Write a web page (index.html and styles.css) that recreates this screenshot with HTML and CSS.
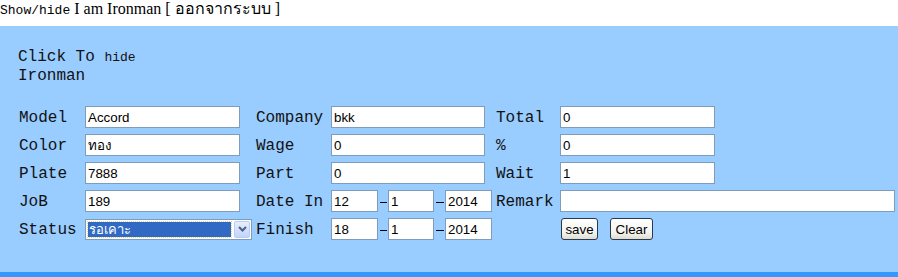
FILE: index.html
```html
<!DOCTYPE html>
<html>
<head>
<meta charset="utf-8">
<link rel="stylesheet" href="styles.css">
</head>
<body>
<div class="topline"><span class="toggle">Show/hide</span> <span class="user">I am Ironman [ ออกจากระบบ ]</span></div>
<div class="panel">
  <div class="intro"><span class="big">Click To </span><span class="small">hide</span><br><span class="big">Ironman</span></div>
  <table class="form">
    <tr>
      <td class="lab c1">Model</td>
      <td class="c2"><input class="txt w155" value="Accord"></td>
      <td class="lab c3">Company</td>
      <td class="c4"><input class="txt w154" value="bkk"></td>
      <td class="lab c5">Total</td>
      <td class="c6"><input class="txt w155" value="0"></td>
    </tr>
    <tr>
      <td class="lab">Color</td>
      <td><input class="txt w155" value="ทอง"></td>
      <td class="lab">Wage</td>
      <td><input class="txt w154" value="0"></td>
      <td class="lab">%</td>
      <td><input class="txt w155" value="0"></td>
    </tr>
    <tr>
      <td class="lab">Plate</td>
      <td><input class="txt w155" value="7888"></td>
      <td class="lab">Part</td>
      <td><input class="txt w154" value="0"></td>
      <td class="lab">Wait</td>
      <td><input class="txt w155" value="1"></td>
    </tr>
    <tr>
      <td class="lab">JoB</td>
      <td><input class="txt w155" value="189"></td>
      <td class="lab">Date In</td>
      <td>
        <div class="date"><input class="txt d47" value="12"><span class="dash"></span><input class="txt d46" value="1"><span class="dash"></span><input class="txt d47" value="2014"></div>
      </td>
      <td class="lab">Remark</td>
      <td><input class="txt w335" value=""></td>
    </tr>
    <tr>
      <td class="lab">Status</td>
      <td>
        <div class="select"><span class="sel-val">รอเคาะ</span><span class="sel-btn"><svg width="9" height="6" viewBox="0 0 9 6"><path d="M1 1 L4.5 4.5 L8 1" fill="none" stroke="#4d6185" stroke-width="2"/></svg></span></div>
      </td>
      <td class="lab">Finish</td>
      <td>
        <div class="date"><input class="txt d47" value="18"><span class="dash"></span><input class="txt d46" value="1"><span class="dash"></span><input class="txt d47" value="2014"></div>
      </td>
      <td class="lab"></td>
      <td><div class="btns"><button class="btn save">save</button><button class="btn clear">Clear</button></div></td>
    </tr>
  </table>
</div>
</body>
</html>
```
FILE: styles.css
```css
html, body {
  margin: 0;
  padding: 0;
  background: #ffffff;
}
.topline {
  height: 18px;
  line-height: 18px;
  white-space: nowrap;
  color: #000;
}
.toggle {
  font-family: "Liberation Mono", monospace;
  font-size: 13px;
}
.user {
  font-family: "Liberation Serif", "Noto Sans", serif;
  font-size: 16px;
}
.panel {
  margin-top: 8px;
  background: #99ccff;
  padding: 22px 0 28px 16px;
  border-bottom: 8px solid #3399ff;
}
.intro {
  font-family: "Liberation Mono", monospace;
  line-height: 18px;
  padding-left: 2px;
  margin-bottom: 17px;
  color: #111;
}
.big { font-size: 16px; }
.small { font-size: 13px; }
.form {
  border-collapse: separate;
  border-spacing: 2px;
}
.form td {
  padding: 2px 1px;
  vertical-align: middle;
}
.lab {
  font-family: "Liberation Mono", monospace;
  font-size: 16px;
  line-height: 18px;
  padding-top: 3px !important;
  color: #111;
  white-space: nowrap;
}
.c1 { width: 62px; }
.c2 { width: 167px; }
.c3 { width: 71px; }
.c4 { width: 161px; }
.c5 { width: 60px; }
.c6 { width: 335px; }
.txt {
  display: block;
  box-sizing: border-box;
  height: 22px;
  margin: 0;
  padding: 0 2px;
  border: 1px solid #7f9db9;
  background: #fff;
  font-family: "Liberation Sans", sans-serif;
  font-size: 13.33px;
  color: #000;
  outline: none;
}
.w155 { width: 155px; }
.w154 { width: 154px; }
.w335 { width: 335px; }
.d47 { width: 47px; }
.d46 { width: 46px; }
.date {
  display: flex;
  align-items: center;
}
.dash {
  width: 10px;
  height: 22px;
  position: relative;
}
.dash::after {
  content: "";
  position: absolute;
  left: 2px;
  right: 1px;
  top: 12px;
  height: 1px;
  background: #000;
}
.date .dash + .d46 + .dash { width: 11px; }
.select {
  box-sizing: border-box;
  width: 167px;
  height: 21px;
  border: 1px solid #7f9db9;
  background: #fff;
  display: flex;
  align-items: center;
  padding: 1px 1px 1px 2px;
}
.sel-val {
  flex: 1;
  height: 15px;
  margin-right: 3px;
  background: #316ac5;
  outline: 1px dotted #e8d77a;
  color: #fff;
  font-family: "Liberation Sans", sans-serif;
  font-size: 13px;
  line-height: 15px;
  padding-left: 1px;
}
.sel-btn {
  box-sizing: border-box;
  width: 16px;
  height: 17px;
  border: 1px solid #b9cdf6;
  border-radius: 2px;
  background: linear-gradient(#e6eefc, #c3d3fd);
  display: flex;
  align-items: center;
  justify-content: center;
}
.btns {
  display: flex;
  align-items: center;
}
.btn {
  box-sizing: border-box;
  height: 22px;
  padding: 0;
  border: 1px solid #2b3a4a;
  border-radius: 3px;
  background: linear-gradient(#ffffff, #f3f3ee 70%, #dedbd0);
  font-family: "Liberation Sans", sans-serif;
  font-size: 13.33px;
  color: #000;
}
.save { width: 37px; margin-left: 1px; }
.clear { width: 43px; margin-left: 12px; }
```
